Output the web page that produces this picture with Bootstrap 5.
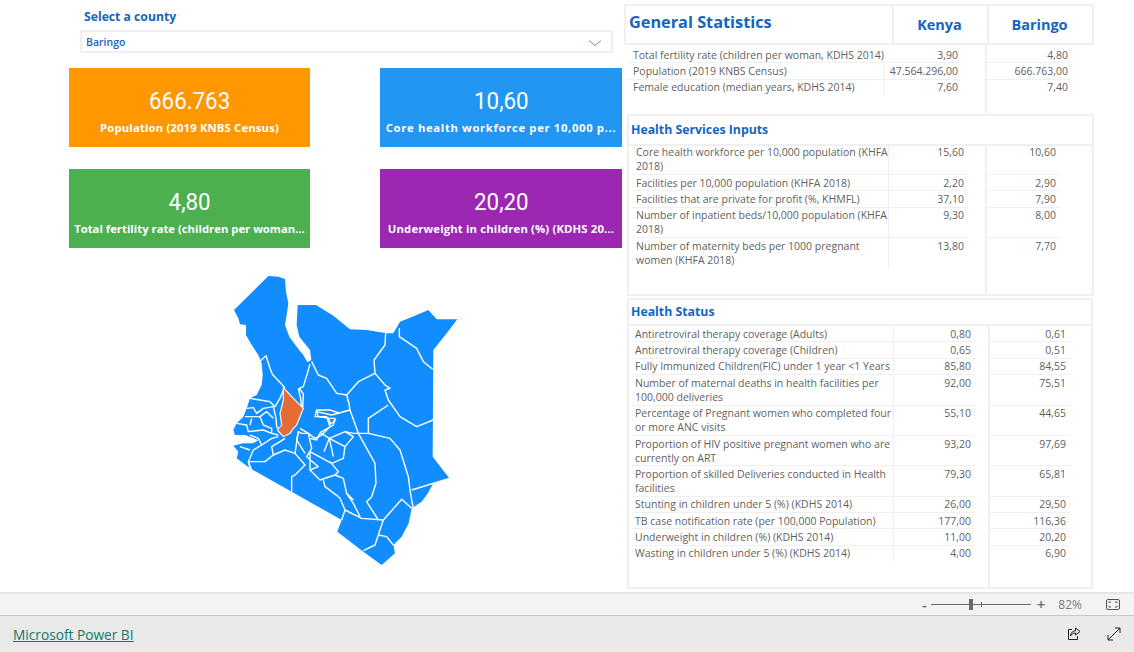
<!DOCTYPE html>
<html lang="en">
<head>
  <meta charset="UTF-8">
  <title>Kenya County Dashboard</title>
  <link href="https://cdn.jsdelivr.net/npm/bootstrap@5.3.3/dist/css/bootstrap.min.css" rel="stylesheet">
  <style>
    html, body { height: 100%; overflow: hidden; background: #fff; }
    body { font-family: "Open Sans", "Liberation Sans", sans-serif; color: #5f5f5f; font-size: 10.5px; }
    .report { height: 592px; }
    .left-side { width: 624px; }
    .right-side { width: 470px; padding-top: 4px; }

    /* slicer */
    .slicer-wrap { padding: 9px 11px 0 80px; height: 68px; }
    .slicer-title { color: #1565c0; font-size: 12.2px; font-weight: 700; padding-left: 4px; line-height: 15px; margin-bottom: 6px; }
    .slicer-box { height: 23px; border: 2px solid #f0f0f0; padding: 3px 5px 0 4px; color: #1d5fc0; font-size: 10.5px; font-weight: 600; }

    /* kpi tiles */
    .tile-grid { display: grid; grid-template-columns: 241px 242px; column-gap: 70px; row-gap: 22px; padding-left: 69px; }
    .tile { height: 79px; color: #fff; padding-top: 18px; text-align: center; }
    .tile-value { display: inline-block; font-family: Roboto, sans-serif; font-size: 24px; line-height: 30px; transform: scaleX(.93); }
    .tile-label { font-size: 11.3px; font-weight: 700; line-height: 15px; margin-top: 4px; white-space: nowrap; letter-spacing: .15px; }
    .tile-label-wide { letter-spacing: .65px; }
    .tile-label-tight { letter-spacing: 0; }
    .tile-orange { background: #ff9800; }
    .tile-blue { background: #2196f3; }
    .tile-green { background: #4caf50; }
    .tile-purple { background: #9c27b0; }

    .map-wrap { padding: 22px 0 0 220px; }

    /* stat tables */
    .stat-head { height: 41px; border: 2px solid #f0f0f0; }
    .stat-title { color: #1565c0; font-size: 16.3px; font-weight: 700; width: 266px; padding: 2px 0 0 3px; line-height: 28px; }
    .stat-col { color: #1565c0; font-size: 14.5px; font-weight: 700; text-align: center; padding: 8px 2px 0 0; border-left: 2px solid #f0f0f0; }
    .sec-title { color: #1565c0; font-size: 12.3px; font-weight: 700; border: 2px solid #f0f0f0; padding-left: 2px; margin-left: 3px; }
    .stat-panel { position: relative; border: 2px solid #f0f0f0; border-top: 0; }
    .stat-divider { position: absolute; top: 0; bottom: 0; border-left: 2px solid #f0f0f0; }
    .stat-row { display: grid; line-height: 14px; }
    .stat-row > div { padding: .7px 4px .7px 0; border-bottom: 1.6px solid #f0f0f0; }
    .stat-row:last-child > div { border-bottom-color: transparent; }
    .stat-row > .cell-label { padding-left: 4px; padding-right: 0; border-right: 1px solid #f0f0f0; }
    .stat-row > .cell-num { text-align: right; }
    .stat-row > .cell-gap { padding: 0; border: 0; }

    .sec-general { height: 68px; padding-top: 2px; }
    .sec-general .stat-row { grid-template-columns: 257px 76px 24px 86px; margin-left: 3px; }
    .sec-general .stat-row > .cell-label { padding-left: 6px; white-space: nowrap; }
    .sec-general .stat-row > .cell-num { padding-right: 2px; }
    .sec-general .stat-divider { left: 361px; }
    .sec-services { margin-left: 3px; height: 150px; overflow: hidden; }
    .sec-services .stat-row { grid-template-columns: 258px 79px 17px 75px; margin-left: 2px; }
    .sec-services .stat-row > .cell-label { padding-left: 5px; }
    .sec-services .stat-divider + .stat-row { margin-top: -1.5px; }
    .sec-services .stat-divider { left: 356px; }
    .sec-status { margin-left: 3px; margin-right: 1px; height: 263px; }
    .sec-status .stat-row { grid-template-columns: 263px 81px 13px 82px; margin-left: 2px; }
    .sec-status .stat-divider { left: 359px; }

    /* bottom bars */
    .zoom-bar { height: 23px; background: #f3f3f3; border-top: 2px solid #e6e6e6; color: #6b6b6b; padding-right: 14px; }
    .slider-track { position: relative; width: 100px; height: 1px; background: #6b6b6b; }
    .slider-thumb { position: absolute; left: 38px; top: -5px; width: 4px; height: 11px; background: #6b6b6b; }
    .slider-tick { position: absolute; left: 50px; top: -2px; width: 1px; height: 5px; background: #6b6b6b; }
    .zoom-sign { font-size: 15px; line-height: 13px; font-weight: 600; }
    .zoom-plus { margin-left: 6px; }
    .zoom-pct { font-size: 12px; margin: 0 24px 0 13px; color: #7a7a7a; }
    .bi-footer { height: 37px; background: #eaeaea; border-top: 1px solid #c8c8c8; padding: 2px 13px 0 13px; }
    .bi-link { color: #117865; font-size: 13.7px; }
    .bi-icons { gap: 26px; margin-top: -2px; }
    .map-lines { fill: none; stroke: #fff; stroke-width: 4.2; stroke-linejoin: round; }
  </style>
</head>
<body>

  <div class="report d-flex">
    <!-- left: slicer, tiles and map -->
    <div class="left-side">
      <div class="slicer-wrap">
        <div class="slicer-title">Select a county</div>
        <div class="slicer-box d-flex align-items-center justify-content-between">
          <span>Baringo</span>
          <svg width="14" height="8" viewBox="0 0 14 8" class="me-1"><path d="M1 1.5l6 5 6-5" fill="none" stroke="#6c8ebf" stroke-width="1"/></svg>
        </div>
      </div>

      <div class="tile-grid">
        <div class="tile tile-orange"><span class="tile-value">666.763</span><div class="tile-label">Population (2019 KNBS Census)</div></div>
        <div class="tile tile-blue"><span class="tile-value">10,60</span><div class="tile-label tile-label-wide">Core health workforce per 10,000 p...</div></div>
        <div class="tile tile-green"><span class="tile-value">4,80</span><div class="tile-label tile-label-tight">Total fertility rate (children per woman...</div></div>
        <div class="tile tile-purple"><span class="tile-value">20,20</span><div class="tile-label">Underweight in children (%) (KDHS 20...</div></div>
      </div>

      <div class="map-wrap">
        <svg width="250" height="300" viewBox="0 0 750 900">
          <!-- country outline -->
          <path fill="#118dff" d="M145 18L175 20L195 27L198 65L205 100L200 135L195 165L208 200L235 237L250 255L262 277L274 270L270 240L238 200L230 165L233 105L288 105L340 137L390 178L440 180L500 190L520 190L540 155L590 135L625 120L650 148L712 148L680 190L640 240L638 560L688 625L640 640L622 672L605 695L575 715L566 760L545 800L520 825L525 850L485 885L430 845L352 785L365 750L215 665L90 595L50 565L55 545L40 527L70 520L100 520L115 510L75 495L45 495L40 480L50 460L70 440L80 415L90 385L110 375L125 345L128 315L125 280L115 255L92 220L78 195L78 165L60 163L55 145L42 120Z"/>
          <!-- county lines, north and east -->
          <g class="map-lines">
            <path d="M118 275L138 257L150 295L157 313L195 353"/>
            <path d="M270 282L262 310L250 350L238 355L250 372L248 415"/>
            <path d="M275 275L295 315L320 325L350 370L380 375L385 395"/>
            <path d="M380 375L415 335L465 310L462 270L495 225L497 190"/>
            <path d="M465 310L495 345L510 355L495 360L505 390L540 440L590 470L640 450"/>
            <path d="M538 175L538 200L590 235L610 275L638 298"/>
            <path d="M570 660L575 690L580 715"/>
            <path d="M575 660L688 625"/>
            <path d="M455 680L440 695L475 750"/>
            <path d="M490 750L545 688L575 715"/>
            <path d="M490 750L475 795L465 825L430 842"/>
            <path d="M475 795L500 800L520 825"/>
            <path d="M365 750L375 720L425 745L490 750"/>
            <path d="M375 720L360 685L355 680M380 670L400 700L420 740"/>
            <path d="M215 665L215 620L225 615"/>
            <path d="M90 595L85 575"/>
          </g>
          <!-- western counties -->
          <g class="map-lines" transform="translate(30 315)">
            <path d="M60 70L90 75L120 80L135 95L150 70L160 45"/>
            <path d="M50 100L70 98L80 115L100 100L130 95L138 130L140 155L150 165"/>
            <path d="M45 125L65 125L90 125L110 110L130 130"/>
            <path d="M20 145L50 150L55 170L100 165L125 175L145 180"/>
            <path d="M65 130L60 150"/>
            <path d="M90 125L100 150L125 160L125 175"/>
            <path d="M60 180L85 190L95 210L125 190L145 185"/>
            <path d="M95 210L70 225L55 260L105 260L130 240L125 215L150 200L165 190"/>
            <path d="M130 240L165 225L195 235L225 270L195 300"/>
            <path d="M60 225L30 215"/>
            <path d="M55 260L65 285"/>
            <path d="M195 235L205 170L215 175L235 175L255 190L275 180L300 155L290 125L255 125L260 105L300 105L330 115"/>
            <path d="M205 170L200 195L225 235"/>
            <path d="M215 100L212 70L205 40"/>
          </g>
          <!-- central counties -->
          <g class="map-lines" transform="translate(240 390)">
            <path d="M145 0L150 30L175 100L225 190L228 250L215 290"/>
            <path d="M150 30L95 45L50 35L55 50L90 55L105 55L100 75L60 98"/>
            <path d="M85 55L92 72L108 60"/>
            <path d="M60 98L88 115L135 95L160 100L175 100L205 100L270 115L300 150L325 230L330 270"/>
            <path d="M205 100L205 55L265 15"/>
            <path d="M88 115L135 140L130 175L95 190L30 155"/>
            <path d="M88 115L72 155M88 115L100 170"/>
            <path d="M135 140L160 110L135 95"/>
            <path d="M0 85L25 100L35 145L20 170L55 200L30 210L60 240L105 225L130 235L140 280L160 300"/>
            <path d="M60 98L50 120L30 115"/>
            <path d="M70 240L75 260L115 290"/>
            <path d="M30 155L30 210"/>
            <path d="M90 185L115 215L105 225"/>
          </g>
          <!-- selected county -->
          <path fill="#e66c37" stroke="#fff" stroke-width="3.4" stroke-linejoin="round" d="M190 353L220 385L250 415L230 465L220 475L210 490L190 500L172 480L185 465L180 430L190 390Z"/>
        </svg>
      </div>
    </div>

    <!-- right: stat tables -->
    <div class="right-side">
      <div class="stat-head d-flex">
        <div class="stat-title">General Statistics</div>
        <div class="stat-col" style="width: 95px">Kenya</div>
        <div class="stat-col flex-grow-1">Baringo</div>
      </div>
      <div class="sec-general position-relative">
        <div class="stat-divider"></div>
        <div class="stat-row"><div class="cell-label">Total fertility rate (children per woman, KDHS 2014)</div><div class="cell-num">3,90</div><div class="cell-gap"></div><div class="cell-num">4,80</div></div>
        <div class="stat-row"><div class="cell-label">Population (2019 KNBS Census)</div><div class="cell-num">47.564.296,00</div><div class="cell-gap"></div><div class="cell-num">666.763,00</div></div>
        <div class="stat-row"><div class="cell-label">Female education (median years, KDHS 2014)</div><div class="cell-num">7,60</div><div class="cell-gap"></div><div class="cell-num">7,40</div></div>
      </div>

      <div class="sec-title" style="height: 32px; line-height: 28px; margin-top: 1px">Health Services Inputs</div>
      <div class="stat-panel sec-services">
        <div class="stat-divider"></div>
        <div class="stat-row"><div class="cell-label">Core health workforce per 10,000 population (KHFA 2018)</div><div class="cell-num">15,60</div><div class="cell-gap"></div><div class="cell-num">10,60</div></div>
        <div class="stat-row"><div class="cell-label">Facilities per 10,000 population (KHFA 2018)</div><div class="cell-num">2,20</div><div class="cell-gap"></div><div class="cell-num">2,90</div></div>
        <div class="stat-row"><div class="cell-label">Facilities that are private for profit (%, KHMFL)</div><div class="cell-num">37,10</div><div class="cell-gap"></div><div class="cell-num">7,90</div></div>
        <div class="stat-row"><div class="cell-label">Number of inpatient beds/10,000 population (KHFA 2018)</div><div class="cell-num">9,30</div><div class="cell-gap"></div><div class="cell-num">8,00</div></div>
        <div class="stat-row"><div class="cell-label">Number of maternity beds per 1000 pregnant women (KHFA 2018)</div><div class="cell-num">13,80</div><div class="cell-gap"></div><div class="cell-num">7,70</div></div>
      </div>

      <div class="sec-title" style="height: 28px; line-height: 24px; margin-top: 2px; margin-right: 1px">Health Status</div>
      <div class="stat-panel sec-status">
        <div class="stat-divider"></div>
        <div class="stat-row"><div class="cell-label">Antiretroviral therapy coverage (Adults)</div><div class="cell-num">0,80</div><div class="cell-gap"></div><div class="cell-num">0,61</div></div>
        <div class="stat-row"><div class="cell-label">Antiretroviral therapy coverage (Children)</div><div class="cell-num">0,65</div><div class="cell-gap"></div><div class="cell-num">0,51</div></div>
        <div class="stat-row"><div class="cell-label">Fully Immunized Children(FIC) under 1 year &lt;1 Years</div><div class="cell-num">85,80</div><div class="cell-gap"></div><div class="cell-num">84,55</div></div>
        <div class="stat-row"><div class="cell-label">Number of maternal deaths in health facilities per 100,000 deliveries</div><div class="cell-num">92,00</div><div class="cell-gap"></div><div class="cell-num">75,51</div></div>
        <div class="stat-row"><div class="cell-label">Percentage of Pregnant women who completed four or more ANC visits</div><div class="cell-num">55,10</div><div class="cell-gap"></div><div class="cell-num">44,65</div></div>
        <div class="stat-row"><div class="cell-label">Proportion of HIV positive pregnant women who are currently on ART</div><div class="cell-num">93,20</div><div class="cell-gap"></div><div class="cell-num">97,69</div></div>
        <div class="stat-row"><div class="cell-label">Proportion of skilled Deliveries conducted in Health facilities</div><div class="cell-num">79,30</div><div class="cell-gap"></div><div class="cell-num">65,81</div></div>
        <div class="stat-row"><div class="cell-label">Stunting in children under 5 (%) (KDHS 2014)</div><div class="cell-num">26,00</div><div class="cell-gap"></div><div class="cell-num">29,50</div></div>
        <div class="stat-row"><div class="cell-label">TB case notification rate (per 100,000 Population)</div><div class="cell-num">177,00</div><div class="cell-gap"></div><div class="cell-num">116,36</div></div>
        <div class="stat-row"><div class="cell-label">Underweight in children (%) (KDHS 2014)</div><div class="cell-num">11,00</div><div class="cell-gap"></div><div class="cell-num">20,20</div></div>
        <div class="stat-row"><div class="cell-label">Wasting in children under 5 (%) (KDHS 2014)</div><div class="cell-num">4,00</div><div class="cell-gap"></div><div class="cell-num">6,90</div></div>
      </div>
    </div>
  </div>

  <!-- zoom bar -->
  <div class="zoom-bar d-flex align-items-center justify-content-end">
    <span class="zoom-sign me-1">-</span>
    <div class="slider-track"><div class="slider-thumb"></div><div class="slider-tick"></div></div>
    <span class="zoom-sign zoom-plus">+</span>
    <span class="zoom-pct">82%</span>
    <svg width="14" height="12" viewBox="0 0 14 12" fill="none" stroke="#555"><rect x=".5" y=".5" width="13" height="10" rx="1.5"/><path d="M3 4V3h2M9 3h2v1M11 7v1H9M5 8H3V7"/></svg>
  </div>

  <!-- footer -->
  <footer class="bi-footer d-flex align-items-center justify-content-between">
    <a class="bi-link" href="#">Microsoft Power BI</a>
    <div class="bi-icons d-flex align-items-center">
      <svg width="14" height="14" viewBox="0 0 14 14" fill="none" stroke="#222"><path d="M5 2.5H1.5v10h9V9"/><path d="M8.5 1l4.5 3.5L8.5 8V6C6 6 4.5 7 3.500 9c0-3 2-5 5-5.200z"/></svg>
      <svg width="14" height="14" viewBox="0 0 14 14" fill="none" stroke="#222"><path d="M1 13L13 1M8 1h5v5M1 8v5h5"/></svg>
    </div>
  </footer>

  <script src="https://cdn.jsdelivr.net/npm/bootstrap@5.3.3/dist/js/bootstrap.bundle.min.js"></script>
</body>
</html>
